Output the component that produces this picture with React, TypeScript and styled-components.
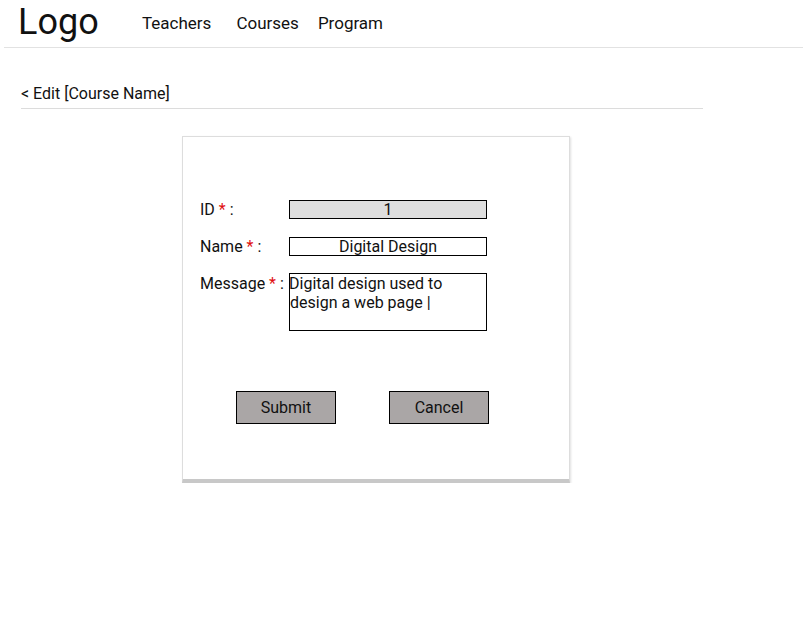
import * as React from 'react';
import styled, { createGlobalStyle } from 'styled-components';

const GlobalStyle = createGlobalStyle`
	body {
		margin: 0;
		background: #fff;
		font-family: Roboto, 'Liberation Sans', sans-serif;
		color: #111;
	}
`;

const SHeader = styled.header`
	display: flex;
	align-items: center;
	height: 48px;
	margin: 0 4px;
	padding-left: 14px;
	border-bottom: 1px solid #e2e2e2;
	box-sizing: border-box;
`;

const SLogo = styled.div`
	font-size: 36px;
	line-height: 1;
	margin-top: -3px;
	width: 124px;
`;

const SNav = styled.nav`
	display: flex;
	font-size: 17px;
	margin-top: -1px;
`;

const SNavLink = styled.span<{ gap: number }>`
	margin-right: ${(p) => p.gap}px;
	cursor: pointer;
`;

const SCrumb = styled.div`
	margin: 36px 0 0 21px;
	width: 682px;
	padding-bottom: 4px;
	border-bottom: 1px solid #dcdcdc;
	font-size: 16px;
	line-height: 20px;
`;

/* bottom edge drawn thicker to read as the card's drop shadow */
const SCard = styled.div`
	margin: 27px 0 0 182px;
	width: 388px;
	height: 347px;
	box-sizing: border-box;
	border: 1px solid #dddddd;
	border-bottom: 4px solid #c8c8c8;
	box-shadow: 1px 1px 2px rgba(0, 0, 0, 0.12);
	padding: 63px 0 0 17px;
`;

const SForm = styled.div`
	display: grid;
	grid-template-columns: 89px 198px;
	row-gap: 18px;
	align-items: start;
`;

const SLabel = styled.label`
	font-size: 16px;
	line-height: 19px;
	white-space: nowrap;
`;

const SStar = styled.span`
	color: #e01010;
`;

const SInput = styled.div<{ disabled?: boolean }>`
	height: 19px;
	box-sizing: border-box;
	border: 1px solid #000;
	background: ${(p) => (p.disabled ? '#dedede' : '#fff')};
	font-size: 16px;
	line-height: 17px;
	text-align: center;
`;

const STextArea = styled.div`
	height: 58px;
	box-sizing: border-box;
	border: 1px solid #000;
	font-size: 16px;
	line-height: 19px;
	padding: 0;
	text-indent: -1px;
	margin-top: -1px;
`;

const SActions = styled.div`
	display: flex;
	gap: 53px;
	margin: 60px 0 0 36px;
`;

const SButton = styled.button`
	width: 100px;
	height: 33px;
	box-sizing: border-box;
	border: 1px solid #000;
	background: #aaa6a6;
	font-family: Roboto, 'Liberation Sans', sans-serif;
	font-size: 16px;
	color: #111;
	padding: 0;
	cursor: pointer;
`;

const Required = ({ label }: { label: string }) => (
	<SLabel>
		{label} <SStar>*</SStar> :
	</SLabel>
);

const App = () => {
	return (
		<>
			<GlobalStyle />
			<SHeader>
				<SLogo>Logo</SLogo>
				<SNav>
					<SNavLink gap={25}>Teachers</SNavLink>
					<SNavLink gap={19}>Courses</SNavLink>
					<SNavLink gap={0}>Program</SNavLink>
				</SNav>
			</SHeader>
			<SCrumb>{'< Edit [Course Name]'}</SCrumb>
			<SCard>
				<SForm>
					<Required label='ID' />
					<SInput disabled>1</SInput>
					<Required label='Name' />
					<SInput>Digital Design</SInput>
					<Required label='Message' />
					<STextArea>
						Digital design used to
						<br />
						design a web page |
					</STextArea>
				</SForm>
				<SActions>
					<SButton>Submit</SButton>
					<SButton>Cancel</SButton>
				</SActions>
			</SCard>
		</>
	);
};

export default App;
